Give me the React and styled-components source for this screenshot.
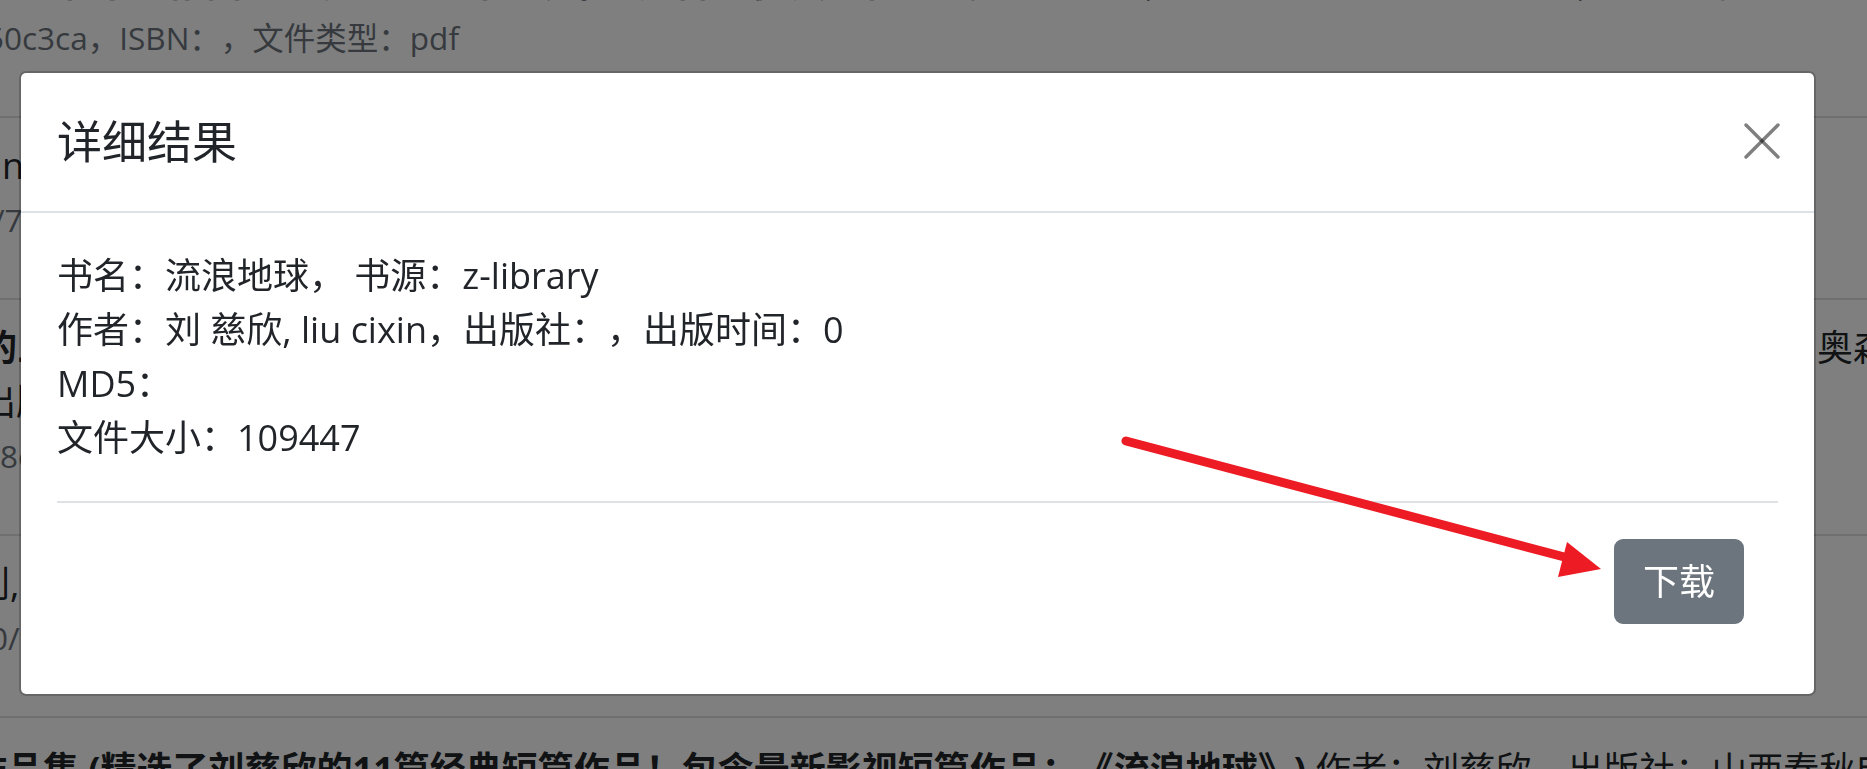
import React from "react";
import styled, { createGlobalStyle } from "styled-components";

const GlobalStyle = createGlobalStyle`
  html, body {
    margin: 0;
    padding: 0;
    height: 100%;
    overflow: hidden;
    background: #fff;
  }
  body {
    font-family: "Open Sans", "Noto Sans CJK SC", sans-serif;
    color: #212529;
    text-spacing-trim: space-all;
  }
  * { box-sizing: border-box; text-spacing-trim: space-all; }
`;

/* ---------- background page (search results list) ---------- */
const ResultList = styled.div`
  margin-top: -64px;
  width: 100%;
`;

const ResultItem = styled.div`
  padding: ${(p) => p.$padTop ?? 21}px 0 51px;
  border-bottom: 2px solid rgba(0, 0, 0, 0.125);
`;

const Line = styled.div`
  height: 54px;
  line-height: 54px;
  white-space: nowrap;
  text-indent: ${(p) => p.$indent || 0}px;
  font-size: ${(p) => (p.$muted ? "31.5px" : "36px")};
  color: ${(p) => (p.$muted ? "#6c757d" : "#212529")};
`;

const Strong = styled.span`
  font-weight: 700;
`;

/* ---------- modal ---------- */
const Backdrop = styled.div`
  position: fixed;
  inset: 0;
  background: rgba(0, 0, 0, 0.5);
  padding: 71px 0 0 19px;
`;

const Dialog = styled.div`
  width: 1797px;
  background: #fff;
  background-clip: padding-box;
  border: 2px solid rgba(0, 0, 0, 0.2);
  border-radius: 7px;
  display: flex;
  flex-direction: column;
`;

const Header = styled.div`
  display: flex;
  align-items: center;
  justify-content: space-between;
  padding: 36px 34px 36px 36px;
  border-bottom: 2px solid #dee2e6;
`;

const Title = styled.h5`
  margin: 0;
  font-size: 45px;
  line-height: 66px;
  font-weight: 400;
  color: #212529;
`;

const CloseButton = styled.button`
  display: flex;
  padding: 0;
  margin: -3px 0 0 0;
  border: 0;
  background: transparent;
  cursor: pointer;
`;

const Body = styled.div`
  padding: 36px;
`;

const InfoLine = styled.div`
  font-size: 36px;
  line-height: 54px;
  color: #212529;
  white-space: nowrap;
`;

const Divider = styled.hr`
  margin: 36px 0;
  border: 0;
  border-top: 2px solid #dee2e6;
  height: 0;
`;

const Actions = styled.div`
  display: flex;
  justify-content: flex-end;
  padding-right: 34px;
  margin-bottom: 34px;
`;

const Button = styled.button`
  font-family: inherit;
  font-size: 36px;
  line-height: 54px;
  padding: 13.5px 27px;
  color: #fff;
  background: #6c757d;
  border: 2px solid #6c757d;
  border-radius: 9px;
  cursor: pointer;
`;

const ArrowLayer = styled.svg`
  position: fixed;
  left: 0;
  top: 0;
  pointer-events: none;
`;

export default function App() {
  return (
    <>
      <GlobalStyle />
      <ResultList>
        <ResultItem>
          <Line $indent={-10}>
            <Strong>地球往事三部曲：流浪地球（刘慈欣中短篇科幻小说选集）</Strong>作者：刘慈欣，出版社：长江文艺出版社，出版时间：2019 [主编]，译者：无，出版时间：2019，页数：329
          </Line>
          <Line $muted $indent={-14}>50c3ca，ISBN：，文件类型：pdf</Line>
        </ResultItem>
        <ResultItem>
          <Line $indent={2}>n，出版社：浙江文艺出版社，出版时间：2008</Line>
          <Line $muted $indent={-7}>/7a1f0d3e9c2b8a4f5d6e，ISBN：，文件类型：epub</Line>
        </ResultItem>
        <ResultItem>
          <Line $indent={-19}>
            <Strong>的三体全集：地球往事三部曲（含三体、黑暗森林、死神永生）</Strong>作者：刘慈欣，编者：无，出版时间：无，出版社：奥森文化传媒
          </Line>
          <Line $indent={-20}>出版时间：2008，页数：1024</Line>
          <Line $muted $indent={0}>8c0e2b7d4a6f9e1c3b5d，ISBN：，文件类型：mobi</Line>
        </ResultItem>
        <ResultItem>
          <Line $indent={-26}>刘, liu cixin，出版社：，出版时间：0</Line>
          <Line $muted $indent={-10}>0/9d3c1a7e5b2f4d6c8a，ISBN：，文件类型：pdf</Line>
        </ResultItem>
        <ResultItem $padTop={25}>
          <Line $indent={-29}>
            <Strong>作品集 (精选了刘慈欣的11篇经典短篇作品！包含最新影视短篇作品：《流浪地球》)</Strong> 作者：刘慈欣，出版社：山西春秋电子音像出版社，出版时间：2019
          </Line>
          <Line $muted>3e5a7c9b1d2f4e6a8c0b，ISBN：，文件类型：epub</Line>
        </ResultItem>
      </ResultList>

      <Backdrop>
        <Dialog role="dialog">
          <Header>
            <Title>详细结果</Title>
            <CloseButton aria-label="Close">
              <svg width="36" height="36" viewBox="0 0 36 36">
                <g stroke="#000" strokeOpacity="0.5" strokeWidth="3.4" strokeLinecap="round">
                  <line x1="2" y1="2" x2="34" y2="34" />
                  <line x1="34" y1="2" x2="2" y2="34" />
                </g>
              </svg>
            </CloseButton>
          </Header>
          <Body>
            <InfoLine>书名：流浪地球， 书源：z-library</InfoLine>
            <InfoLine>作者：刘 慈欣, liu cixin，出版社：，出版时间：0</InfoLine>
            <InfoLine>MD5：</InfoLine>
            <InfoLine>文件大小：109447</InfoLine>
            <Divider />
            <Actions>
              <Button>下载</Button>
            </Actions>
          </Body>
        </Dialog>
      </Backdrop>

      <ArrowLayer width="1867" height="769" viewBox="0 0 1867 769">
        <line x1="1126" y1="441" x2="1572" y2="559" stroke="#ed1c24" strokeWidth="9" strokeLinecap="round" />
        <polygon points="1601,569 1567,542 1558,577" fill="#ed1c24" />
      </ArrowLayer>
    </>
  );
}
